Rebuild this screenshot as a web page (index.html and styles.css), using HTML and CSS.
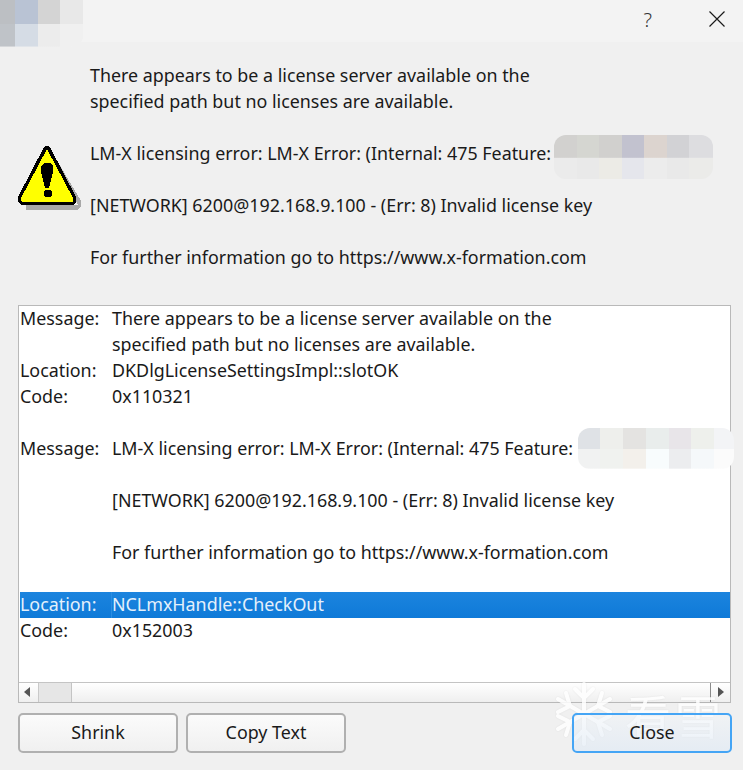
FILE: index.html
```html
<!DOCTYPE html>
<html lang="en">
<head>
  <meta charset="UTF-8">
  <title>License Error</title>
  <link rel="stylesheet" href="styles.css">
</head>
<body>
  <div class="dialog">
    <header class="titlebar">
      <span class="help-btn">?</span>
      <svg class="close-x" width="16" height="16" viewBox="0 0 16 16">
        <path d="M0.5 0.5L15.5 15.5M15.5 0.5L0.5 15.5" stroke="#1a1a1a" stroke-width="1.2" fill="none"/>
      </svg>
    </header>

    <div class="summary">
      <svg class="warn-icon" width="64" height="66" viewBox="0 0 64 66" shape-rendering="crispEdges">
        <path d="M32 6L34 7L63 56V61L60 65H8V60H60z" fill="#a8a8a8"/>
        <path d="M26 2L28 1H30L32 2L58 52V57L55 60H3L0 57V52z" fill="#000"/>
        <path d="M29 4L55 53V56L54 57H4L3 56V53z" fill="#ffff00"/>
        <path d="M23 21L26 18H32L35 21V27L31 43H27L23 27z" fill="#000"/>
        <rect x="26" y="45" width="8" height="7" rx="3" fill="#000"/>
      </svg>
      <div class="summary-text">
        <p>There appears to be a license server available on the<br>specified path but no licenses are available.</p>
        <p>LM-X licensing error: LM-X Error: (Internal: 475 Feature:</p>
        <p>[NETWORK] 6200@192.168.9.100 - (Err: 8) Invalid license key</p>
        <p>For further information go to https://www.x-formation.com</p>
      </div>
    </div>

    <div class="details">
      <div class="details-body">
        <div class="row"><span class="key">Message:</span><span class="val">There appears to be a license server available on the</span></div>
        <div class="row"><span class="key"></span><span class="val">specified path but no licenses are available.</span></div>
        <div class="row"><span class="key">Location:</span><span class="val">DKDlgLicenseSettingsImpl::slotOK</span></div>
        <div class="row"><span class="key">Code:</span><span class="val">0x110321</span></div>
        <div class="row"></div>
        <div class="row"><span class="key">Message:</span><span class="val">LM-X licensing error: LM-X Error: (Internal: 475 Feature:</span></div>
        <div class="row"></div>
        <div class="row"><span class="key"></span><span class="val">[NETWORK] 6200@192.168.9.100 - (Err: 8) Invalid license key</span></div>
        <div class="row"></div>
        <div class="row"><span class="key"></span><span class="val">For further information go to https://www.x-formation.com</span></div>
        <div class="row"></div>
        <div class="row selected"><span class="key">Location:</span><span class="val">NCLmxHandle::CheckOut</span></div>
        <div class="row"><span class="key">Code:</span><span class="val">0x152003</span></div>
      </div>
      <div class="hscroll">
        <span class="arrow arrow-left"></span>
        <span class="thumb"></span>
        <span class="track"></span>
        <span class="arrow arrow-right"></span>
      </div>
    </div>

    <div class="actions">
      <button class="btn">Shrink</button>
      <button class="btn">Copy Text</button>
      <button class="btn btn-default">Close</button>
    </div>
  </div>

  <!-- pixelated patches over the screenshot -->
  <div class="blur blur-logo"></div>
  <div class="blur blur-feature"></div>
  <div class="blur blur-feature2"></div>

  <!-- watermark -->
  <div class="watermark">
    <svg width="58" height="64" viewBox="0 0 58 64">
      <g stroke="#fff" stroke-width="4" fill="none" stroke-linecap="round">
        <path d="M29 2V62M3 17L55 47M55 17L3 47"/>
        <path d="M20 7L29 16L38 7M20 57L29 48L38 57"/>
        <path d="M3 30L15 24L11 11M55 30L43 24L47 11M3 34L15 40L11 53M55 34L43 40L47 53"/>
      </g>
    </svg>
    <span class="watermark-text">看雪</span>
  </div>
</body>
</html>
```

FILE: styles.css
```css
html, body {
  margin: 0;
  padding: 0;
}

body {
  width: 743px;
  height: 770px;
  position: relative;
  overflow: hidden;
  background-color: #f0f0f0;
  font-family: "Noto Sans", "Open Sans", sans-serif;
  font-size: 17.88px;
  color: #1a1a1a;
}

.dialog {
  display: flex;
  flex-direction: column;
  height: 770px;
}

.titlebar {
  height: 42px;
  background-color: #f3f3f3;
  display: flex;
  justify-content: flex-end;
  align-items: center;
  gap: 57px;
  padding: 0 18px 4px 0;
  box-sizing: border-box;
}

.help-btn {
  font-size: 20px;
  font-weight: 300;
  line-height: 24px;
  padding-top: 2px;
  color: #333;
}

.summary {
  display: flex;
  align-items: flex-start;
  padding: 20px 0 0 18px;
  height: 242px;
  box-sizing: border-box;
}

.warn-icon {
  flex: none;
  margin: 83px 8px 0 0;
}

.summary-text p {
  margin: 0 0 26px;
  line-height: 26px;
}

.summary-text p:last-child {
  margin-bottom: 0;
}

.details {
  margin: 21px 0 0 18px;
  width: 713px;
  height: 398px;
  box-sizing: border-box;
  border: 1px solid #b9b9b9;
  background-color: #fff;
  display: flex;
  flex-direction: column;
}

.details-body {
  flex: 1;
  padding-left: 1px;
}

.row {
  display: flex;
  height: 26px;
  line-height: 24px;
}

.key {
  width: 92px;
  flex: none;
}

.val {
  white-space: nowrap;
}

.selected {
  background: linear-gradient(#1c84de, #0f7ad8);
  color: #e4f0fb;
}

.selected .val {
  flex: 1;
  border-left: 1px solid #2a8de2;
  margin-left: -1px;
}

.hscroll {
  height: 19px;
  display: flex;
  border-top: 1px solid #c4c4c4;
  background: linear-gradient(#fff, #efefef);
}

.arrow {
  width: 20px;
  flex: none;
  position: relative;
  border-right: 1px solid #c9c9c9;
  box-sizing: border-box;
}

.arrow::before {
  content: "";
  position: absolute;
  top: 4px;
  border-top: 5px solid transparent;
  border-bottom: 5px solid transparent;
}

.arrow-left::before {
  left: 5px;
  border-right: 6px solid #555;
}

.arrow-right {
  border-right: none;
  border-left: 1px solid #8a8a8a;
}

.arrow-right::before {
  left: 7px;
  border-left: 6px solid #555;
}

.thumb {
  width: 33px;
  flex: none;
  background-color: #e6e6e6;
  border-right: 1px solid #c4c4c4;
  box-sizing: border-box;
}

.track {
  flex: 1;
}

.actions {
  display: flex;
  gap: 8px;
  margin: 10px 11px 0 18px;
  position: relative;
  z-index: 1;
}

.btn {
  width: 160px;
  height: 40px;
  border: 2px solid #b0b0b0;
  border-radius: 5px;
  background: linear-gradient(#fbfbfb, #f0f0f0);
  font-family: inherit;
  font-size: 17.88px;
  line-height: 32px;
  color: #1a1a1a;
  padding: 0 0 2px;
}

.btn-default {
  margin-left: auto;
  border-color: #45a5f5;
  background: linear-gradient(rgba(240, 245, 250, 0.45), rgba(222, 233, 245, 0.6));
}

.blur {
  position: absolute;
  background-repeat: no-repeat;
  background-size: 100% 52%, 100% 48%;
  background-position: top, bottom;
}

.blur-logo {
  left: 0;
  top: 0;
  width: 84px;
  height: 47px;
  border-bottom-right-radius: 14px;
  background-image:
    linear-gradient(90deg, #bcbfc3 0 15px, #b9c3d4 15px 38px, #d4d4d4 38px 60px, #e8e8e8 60px 83px, transparent 83px),
    linear-gradient(90deg, #bfc3c8 0 15px, #d5dce5 15px 38px, #ececec 38px 60px, #f0f0f0 60px 83px, transparent 83px);
}

.blur-feature {
  left: 554px;
  top: 135px;
  width: 159px;
  height: 44px;
  border-radius: 12px;
  background-image:
    linear-gradient(90deg, #d2d1cf 0 23px, #d5d6d1 23px 45px, #d1d0ce 45px 68px, #c2c2cf 68px 90px, #dcd4cf 90px 113px, #d2d2d5 113px 135px, #dddde0 135px),
    linear-gradient(90deg, #ebebeb 0 23px, #e9e9e9 23px 45px, #ecebe6 45px 68px, #e5e6ec 68px 90px, #ececec 90px 113px, #e9e9e9 113px 135px, #ebebe9 135px);
}

.blur-feature2 {
  left: 578px;
  top: 428px;
  width: 156px;
  height: 41px;
  border-radius: 12px;
  background-image:
    linear-gradient(90deg, #dfe2e6 0 22px, #eeefec 22px 45px, #e4e3e1 45px 68px, #e9edec 68px 91px, #e8e5e9 91px 113px, #eef0ec 113px 136px, #f3f4f6 136px),
    linear-gradient(90deg, #f1f2f2 0 22px, #f0f2ef 22px 45px, #f3f0eb 45px 68px, #f8fcfd 68px 91px, #ecedef 91px 113px, #f5f8fa 113px 136px, #fbfbfb 136px);
}

.watermark {
  position: absolute;
  left: 555px;
  top: 682px;
  display: flex;
  align-items: center;
  gap: 12px;
  opacity: 0.85;
  filter: drop-shadow(0 0 1px rgba(0, 0, 0, 0.08));
  pointer-events: none;
}

.watermark-text {
  font-family: "Noto Sans CJK SC", sans-serif;
  font-size: 46px;
  line-height: 60px;
  color: #fff;
  letter-spacing: 4px;
}
```
